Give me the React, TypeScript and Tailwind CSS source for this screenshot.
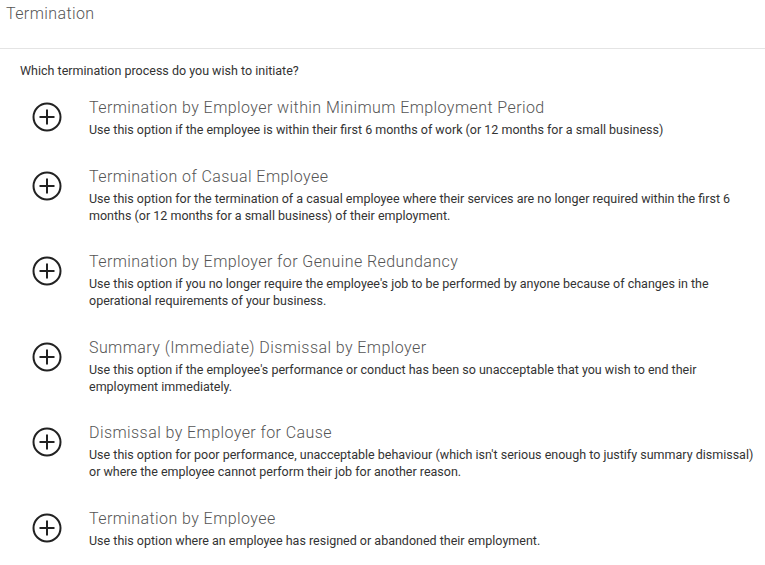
const OPTIONS = [
  {
    title: 'Termination by Employer within Minimum Employment Period',
    desc: 'Use this option if the employee is within their first 6 months of work (or 12 months for a small business)',
  },
  {
    title: 'Termination of Casual Employee',
    desc: 'Use this option for the termination of a casual employee where their services are no longer required within the first 6 months (or 12 months for a small business) of their employment.',
  },
  {
    title: 'Termination by Employer for Genuine Redundancy',
    desc: "Use this option if you no longer require the employee's job to be performed by anyone because of changes in the operational requirements of your business.",
  },
  {
    title: 'Summary (Immediate) Dismissal by Employer',
    desc: "Use this option if the employee's performance or conduct has been so unacceptable that you wish to end their employment immediately.",
  },
  {
    title: 'Dismissal by Employer for Cause',
    desc: "Use this option for poor performance, unacceptable behaviour (which isn't serious enough to justify summary dismissal) or where the employee cannot perform their job for another reason.",
  },
  {
    title: 'Termination by Employee',
    desc: 'Use this option where an employee has resigned or abandoned their employment.',
  },
];

const PlusCircle = () => (
  <svg width="30" height="30" viewBox="0 0 30 30" fill="none" stroke="#222" strokeWidth="2">
    <circle cx="15" cy="15" r="13.5" />
    <path d="M15 7.5v15M7.5 15h15" />
  </svg>
);

export default function App() {
  return (
    <div className="w-[765px] h-[565px] bg-white font-['Roboto',sans-serif] overflow-hidden">
      <header className="h-[49px] border-b border-[#e4e4e4] pl-[6px] pt-[4px]">
        <h1 className="text-[16px] font-light text-[#555] leading-[20px] tracking-[0.4px]">Termination</h1>
      </header>

      <section className="pl-[20px] pt-[14px]">
        <p className="text-[12.5px] text-[#333] leading-[16px]">Which termination process do you wish to initiate?</p>

        <ul className="flex flex-col gap-[28.5px] mt-[19px]">
          {OPTIONS.map((o) => (
            <li key={o.title} className="flex cursor-pointer">
              <div className="w-[69px] shrink-0 pl-[12px] pt-[4px]">
                <PlusCircle />
              </div>
              <div className="flex flex-col">
                <span className="text-[16px] font-light text-[#555] leading-[20px] tracking-[0.42px]">{o.title}</span>
                <span className="text-[12.5px] text-[#333] leading-[17px] mt-[3px]">{o.desc}</span>
              </div>
            </li>
          ))}
        </ul>
      </section>
    </div>
  );
}
